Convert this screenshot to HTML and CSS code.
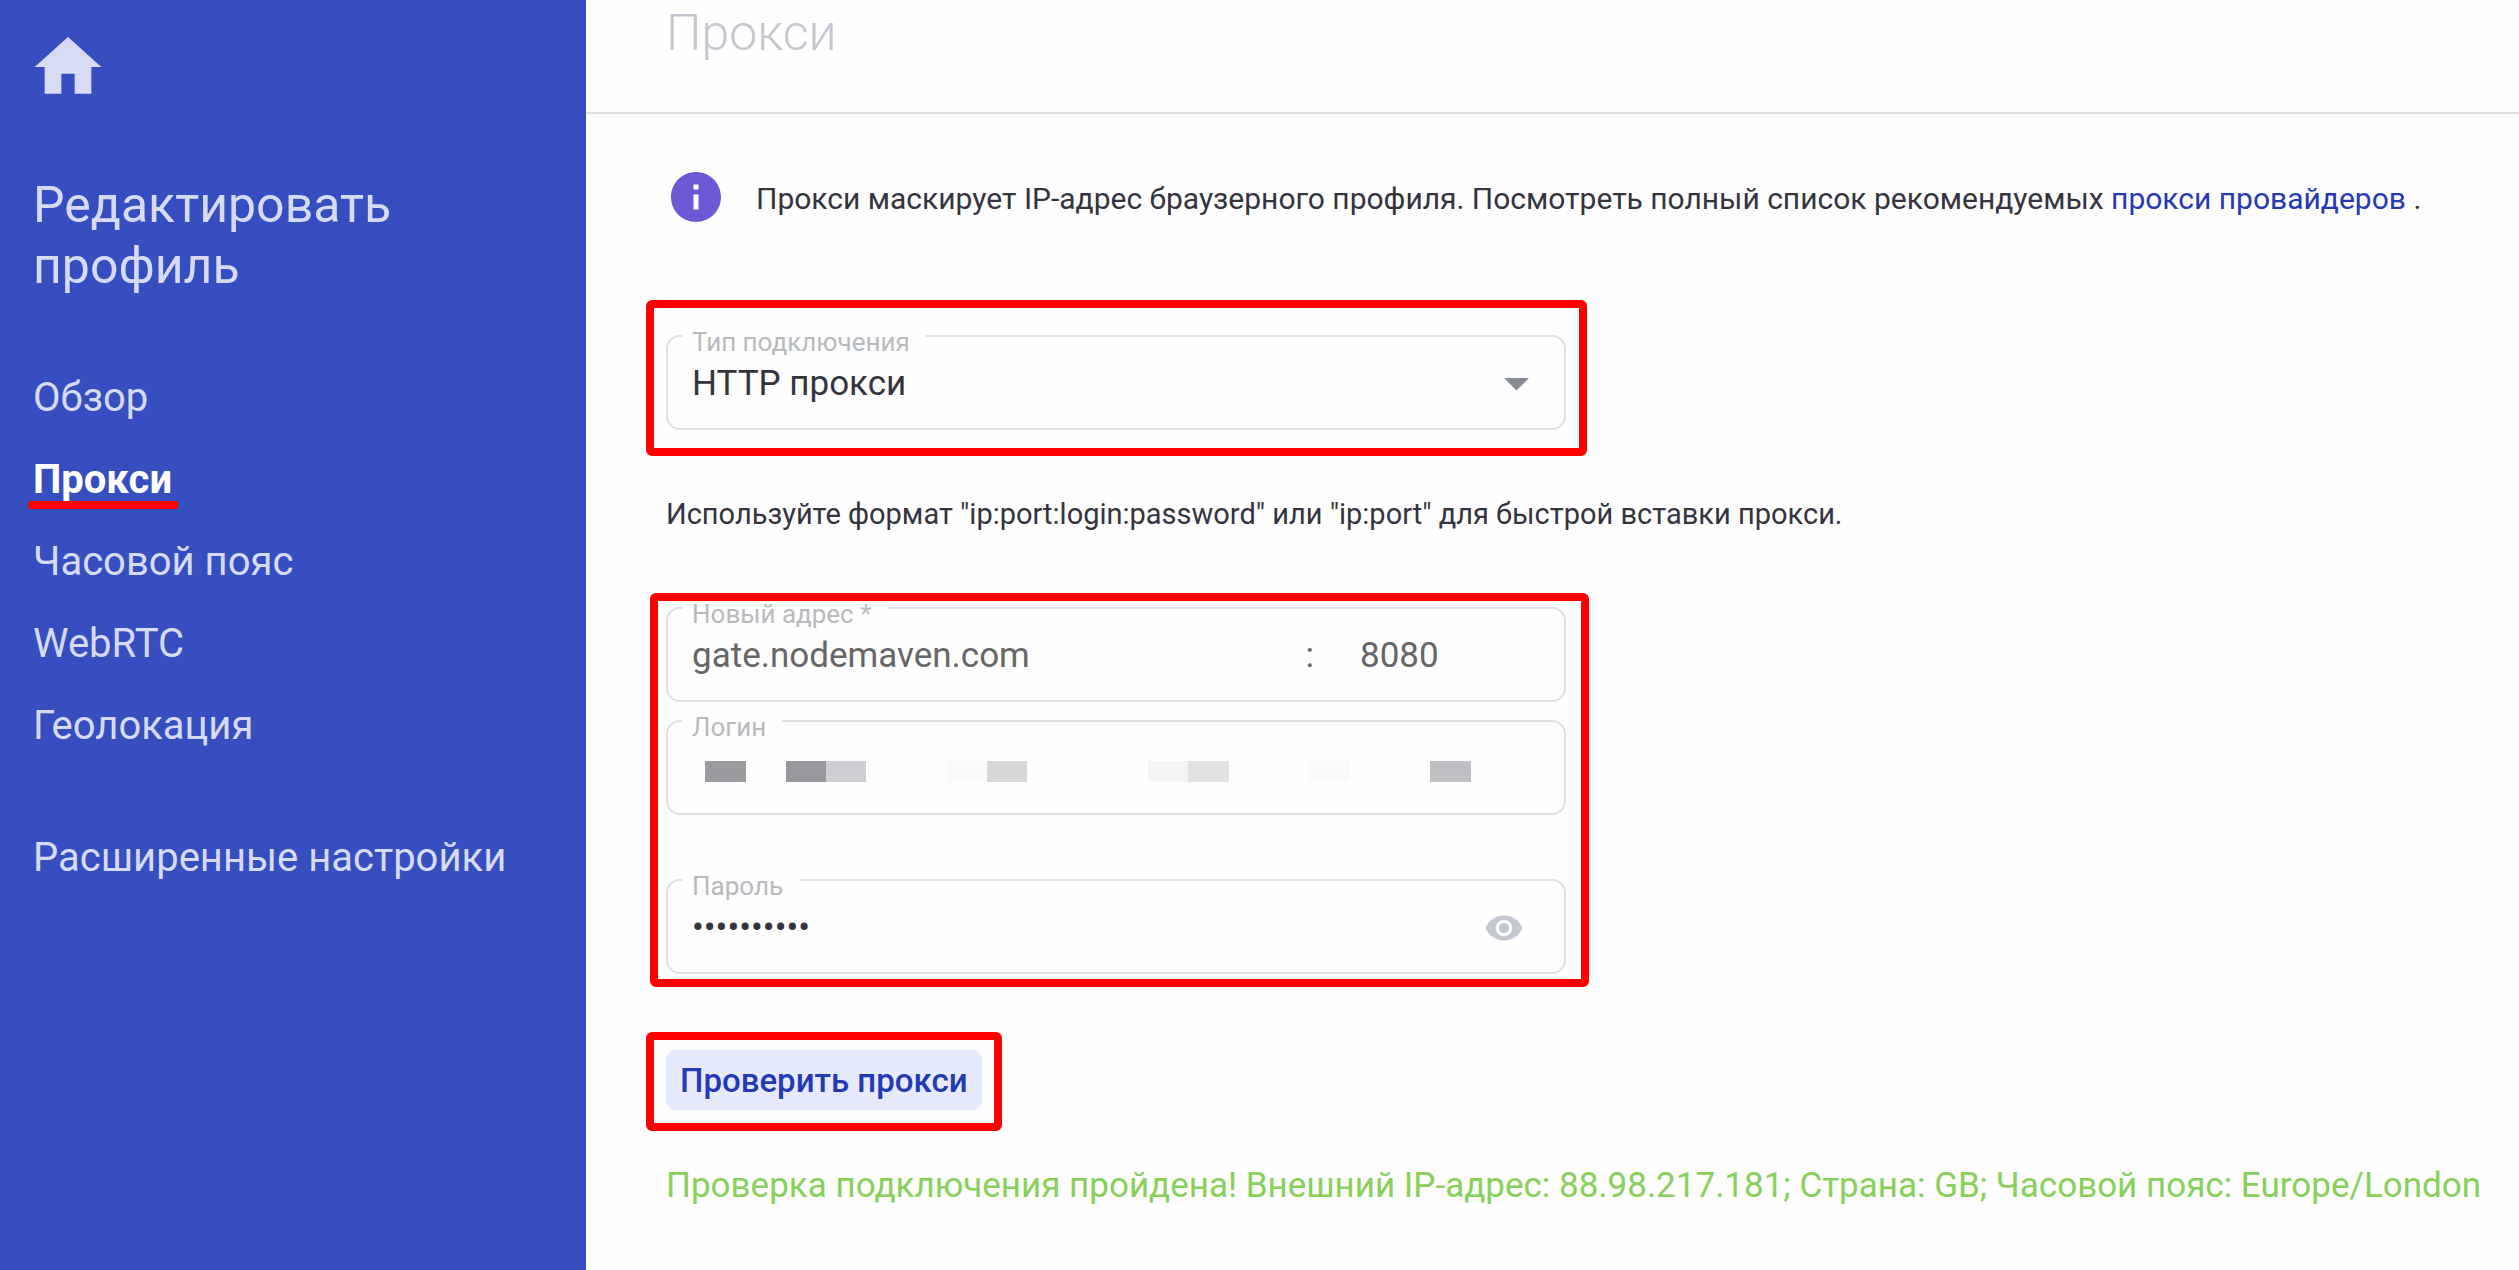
FILE: index.html
```
<!DOCTYPE html>
<html lang="ru">
<head>
  <meta charset="UTF-8" />
  <meta name="viewport" content="width=device-width, initial-scale=1.0"/>
  <title>Прокси</title>
  <link rel="stylesheet" href="styles.css">
</head>
<body>
  <aside class="sidebar">
    <a href="#" class="home" aria-label="Главная">
      <svg viewBox="0 0 24 24"><path d="M10 20v-6h4v6h5v-8h3L12 3 2 12h3v8z"/></svg>
    </a>
    <h2>Редактировать профиль</h2>
    <nav>
      <a href="#">Обзор</a>
      <a href="#" class="active">Прокси</a>
      <a href="#">Часовой пояс</a>
      <a href="#">WebRTC</a>
      <a href="#">Геолокация</a>
      <a href="#" class="advanced">Расширенные настройки</a>
    </nav>
  </aside>

  <main>
    <header>
      <h1>Прокси</h1>
    </header>

    <form id="proxyForm">
      <div class="info">
        <svg viewBox="0 0 24 24"><path d="M12 2C6.48 2 2 6.48 2 12s4.48 10 10 10 10-4.48 10-10S17.52 2 12 2zm1 15h-2v-6h2v6zm0-8h-2V7h2v2z"/></svg>
        <p>Прокси маскирует IP-адрес браузерного профиля. Посмотреть полный список рекомендуемых <a href="#">прокси провайдеров</a> .</p>
      </div>

      <div class="group mark mark-type">
        <div class="field">
          <label for="type">Тип подключения</label>
          <select id="type" name="type">
            <option>HTTP прокси</option>
          </select>
          <svg class="arrow" viewBox="0 0 24 12"><path d="M0 0h24L12 12z"/></svg>
        </div>
      </div>

      <p class="hint">Используйте формат "ip:port:login:password" или "ip:port" для быстрой вставки прокси.</p>

      <div class="group mark mark-address">
        <div class="field address">
          <label for="host">Новый адрес *</label>
          <input type="text" id="host" name="host" value="gate.nodemaven.com" />
          <span>:</span>
          <input type="text" id="port" name="port" value="8080" aria-label="Порт" />
        </div>

        <div class="field">
          <label for="login">Логин</label>
          <input type="text" id="login" name="login" />
          <!-- hidden login -->
          <svg class="masked" viewBox="0 0 766 21">
            <rect x="0" width="41" height="21" fill="#9b9b9f"/>
            <rect x="81" width="40" height="21" fill="#98989d"/>
            <rect x="121" width="40" height="21" fill="#cdcdd2"/>
            <rect x="242" width="40" height="21" fill="#fafafa"/>
            <rect x="282" width="40" height="21" fill="#d7d7d9"/>
            <rect x="443" width="40" height="21" fill="#f5f5f5"/>
            <rect x="483" width="41" height="21" fill="#e2e2e2"/>
            <rect x="604" width="41" height="21" fill="#fafafa"/>
            <rect x="725" width="41" height="21" fill="#c0c0c4"/>
          </svg>
        </div>

        <div class="field password">
          <label for="password">Пароль</label>
          <input type="password" id="password" name="password" value="1234567890" />
          <button type="button" class="eye" aria-label="Показать пароль">
            <svg viewBox="0 0 24 24"><path d="M12 4.5C7 4.5 2.73 7.61 1 12c1.73 4.39 6 7.5 11 7.5s9.27-3.11 11-7.5c-1.73-4.39-6-7.5-11-7.5zM12 17c-2.76 0-5-2.24-5-5s2.24-5 5-5 5 2.24 5 5-2.24 5-5 5zm0-8c-1.66 0-3 1.34-3 3s1.34 3 3 3 3-1.34 3-3-1.34-3-3-3z"/></svg>
          </button>
        </div>
      </div>

      <div class="check mark mark-check">
        <button type="submit" class="btn">Проверить прокси</button>
      </div>

      <p class="success">Проверка подключения пройдена! Внешний IP-адрес: 88.98.217.181; Страна: GB; Часовой пояс: Europe/London</p>
    </form>
  </main>
</body>
</html>
```
FILE: styles.css
```
* {
  box-sizing: border-box;
}

body {
  margin: 0;
  min-height: 100vh;
  display: flex;
  font-family: Roboto, sans-serif;
  font-size: 30px;
  line-height: 40px;
  color: #34343f;
  background: #fefefe;
}

h1, h2, p {
  margin: 0;
}

a {
  color: #2439b4;
  text-decoration: none;
}

svg {
  display: block;
}

.sidebar {
  flex: 0 0 586px;
  padding: 27px 33px;
  background: #374ec0;
}

.home {
  display: block;
  width: 80px;
  margin-left: -5px;
}

.home svg {
  fill: #d6dbf3;
}

.sidebar h2 {
  margin-top: 68px;
  font-size: 50px;
  line-height: 61px;
  font-weight: 400;
  color: #d6dbf3;
}

nav {
  display: flex;
  flex-direction: column;
  align-items: flex-start;
  gap: 32px;
  margin-top: 76px;
}

nav a {
  font-size: 40px;
  line-height: 50px;
  color: #d6dbf3;
}

nav .active {
  position: relative;
  font-weight: 700;
  color: #fff;
}

nav .active::after {
  content: "";
  position: absolute;
  left: -5px;
  right: -6px;
  bottom: -4px;
  height: 8px;
  border-radius: 2px;
  background: #f00;
}

nav .advanced {
  margin-top: 50px;
}

main {
  flex: 1;
  min-width: 0;
}

header {
  height: 114px;
  padding: 3px 80px 0;
  border-bottom: 2px solid #e1e0e6;
}

h1 {
  font-size: 50px;
  line-height: 61px;
  font-weight: 300;
  color: #c4c7cf;
}

form {
  padding: 53px 20px 53px 80px;
}

.info {
  display: flex;
  align-items: center;
  gap: 30px;
}

.info svg {
  flex: none;
  width: 60px;
  fill: #6f58d6;
}

.info p {
  padding-top: 4px;
}

.group {
  display: flex;
  flex-direction: column;
  gap: 18px;
  max-width: 900px;
}

.field {
  position: relative;
  display: flex;
  align-items: center;
  height: 95px;
  padding: 3px 24px 0;
  border: 2px solid #e0e0e0;
  border-radius: 14px;
}

.field label {
  position: absolute;
  left: 14px;
  top: -10px;
  padding: 0 16px 0 10px;
  font-size: 26px;
  line-height: 30px;
  color: #b7babf;
  background: #fefefe;
}

.field input, .field select {
  flex: 1;
  min-width: 0;
  height: 40px;
  padding: 0;
  border: none;
  outline: none;
  appearance: none;
  background: none;
  font-family: inherit;
  font-size: 35px;
  line-height: 40px;
  color: #34343f;
}

.address input, .address span {
  font-size: 35px;
  color: #666;
}

.field #port {
  flex: 0 0 180px;
  margin-left: 46px;
}

.arrow {
  width: 25px;
  margin-right: 11px;
  fill: #858c94;
}

.masked {
  position: absolute;
  left: 37px;
  top: 39px;
  width: 766px;
  max-width: 90%;
}

.password {
  margin-top: 46px;
}

.eye {
  width: 40px;
  margin-right: 16px;
  padding: 0;
  border: none;
  background: none;
  cursor: pointer;
}

.eye svg {
  fill: #c4c7cf;
}

.hint {
  margin: 64px 0 73px;
  font-size: 29px;
}

/* red frames around the highlighted blocks */
.mark {
  position: relative;
}

.mark::after {
  content: "";
  position: absolute;
  border: 8px solid #f00;
  border-radius: 6px;
  pointer-events: none;
}

.mark-type {
  margin-top: 108px;
}

.mark-type::after {
  inset: -35px -21px -26px -20px;
}

.mark-address::after {
  inset: -14px -23px -13px -16px;
}

.mark-check::after {
  inset: -18px -20px -21px -20px;
}

.check {
  width: fit-content;
  margin-top: 76px;
}

.btn {
  display: block;
  height: 60px;
  padding: 0 14px;
  border: none;
  border-radius: 10px;
  background: #e5eafe;
  font-family: inherit;
  font-size: 33px;
  font-weight: 500;
  color: #2439b4;
  cursor: pointer;
}

.success {
  margin-top: 56px;
  font-size: 35px;
  color: #87d05a;
}
```
